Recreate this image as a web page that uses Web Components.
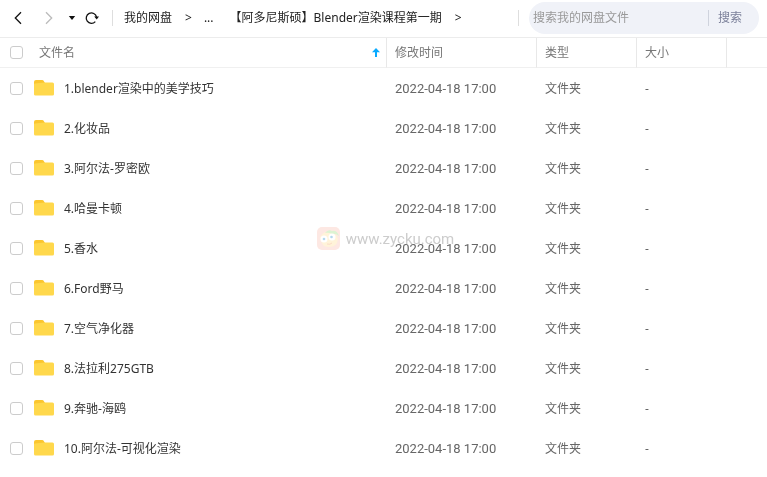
<!DOCTYPE html>
<html lang="zh-CN">
<head>
<meta charset="utf-8">
<meta name="viewport" content="width=device-width, initial-scale=1">
<title>我的网盘</title>
<style>
  body {
    margin: 0;
    background: #fff;
    color: #333;
    font: 12px/20px 'Noto Sans', 'Noto Sans CJK SC', sans-serif;
  }
</style>
</head>
<body>

<drive-toolbar>
  <crumb-link>我的网盘</crumb-link>
  <crumb-link short>...</crumb-link>
  <crumb-link>【阿多尼斯硕】Blender渲染课程第一期</crumb-link>
  <search-box slot="search" placeholder="搜索我的网盘文件">搜索</search-box>
</drive-toolbar>
<file-list></file-list>
<site-watermark>www.zycku.com</site-watermark>

<script>
const toolbarTemplate = document.createElement('template');
toolbarTemplate.innerHTML = `
  <style>
    :host {
      display: flex;
      align-items: center;
      box-sizing: border-box;
      height: 38px;
      padding: 0 8px 1px 0;
      border-bottom: 1px solid #ececec;
    }
    .history {
      display: flex;
      align-items: center;
      padding-left: 8px;
    }
    button {
      display: flex;
      align-items: center;
      justify-content: center;
      width: 20px;
      height: 20px;
      padding: 0;
      border: 0;
      background: none;
      color: #111;
      cursor: pointer;
    }
    button:disabled {
      color: #bbb;
    }
    .forward {
      margin-left: 10px;
    }
    .menu {
      margin-left: 4px;
    }
    .crumbs {
      display: flex;
      flex: 1;
      align-items: center;
      height: 16px;
      margin-left: 10px;
      padding-left: 11px;
      border-left: 1px solid #dedede;
      border-right: 1px solid #dedede;
    }
    svg {
      display: block;
    }
  </style>
  <div class="history">
    <button class="back" aria-label="后退">
      <svg width="20" height="20" fill="none" stroke="currentColor" stroke-width="1.3"><path d="M13 4.300 7.300 10l5.700 5.700"/></svg>
    </button>
    <button class="forward" aria-label="前进" disabled>
      <svg width="20" height="20" fill="none" stroke="currentColor" stroke-width="1.3"><path d="M8 4.300 13.700 10 8 15.700"/></svg>
    </button>
    <button class="menu" aria-label="历史记录">
      <svg width="20" height="20" fill="currentColor"><path d="M6.800 8h6.400L10 12z"/></svg>
    </button>
    <button class="reload" aria-label="刷新">
      <svg width="20" height="20" fill="none" stroke="currentColor" stroke-width="1.3"><path d="M13.300 13.600A5.200 5.200 0 1 1 14.500 9"/><path d="M12.200 8.400h4.800l-2.300 3.200z" fill="currentColor" stroke="none"/></svg>
    </button>
  </div>
  <nav class="crumbs"><slot></slot></nav>
  <slot name="search"></slot>
`;

class DriveToolbar extends HTMLElement {
  constructor() {
    super();
    this.attachShadow({ mode: 'open' });
    this.shadowRoot.appendChild(toolbarTemplate.content.cloneNode(true));
  }
}

const crumbTemplate = document.createElement('template');
crumbTemplate.innerHTML = `
  <style>
    :host {
      display: flex;
      white-space: nowrap;
      color: #222;
    }
    a {
      color: inherit;
      text-decoration: none;
    }
    span {
      margin: 0 12px 0 13px;
    }
    :host([short]) span {
      display: none;
    }
    :host([short]) {
      margin-right: 16px;
    }
  </style>
  <a href="#"><slot></slot></a>
  <span>&gt;</span>
`;

class CrumbLink extends HTMLElement {
  constructor() {
    super();
    this.attachShadow({ mode: 'open' });
    this.shadowRoot.appendChild(crumbTemplate.content.cloneNode(true));
  }
}

const searchTemplate = document.createElement('template');
searchTemplate.innerHTML = `
  <style>
    :host {
      display: flex;
      flex: none;
      align-items: center;
      width: 230px;
      height: 32px;
      margin-left: 10px;
      border-radius: 16px;
      background: #f0f2f8;
    }
    input {
      flex: 1;
      min-width: 0;
      padding: 0 4px;
      border: 0;
      outline: 0;
      background: none;
      font: inherit;
      color: #333;
    }
    input::placeholder {
      color: #999;
      opacity: 1;
    }
    button {
      height: 16px;
      padding: 0 17px 0 9px;
      border: 0;
      border-left: 1px solid #cfd3dd;
      background: none;
      font: inherit;
      line-height: 16px;
      color: #7c819a;
      cursor: pointer;
    }
  </style>
  <input type="text">
  <button><slot></slot></button>
`;

class SearchBox extends HTMLElement {
  constructor() {
    super();
    this.attachShadow({ mode: 'open' });
    this.shadowRoot.appendChild(searchTemplate.content.cloneNode(true));
  }

  connectedCallback() {
    const input = this.shadowRoot.querySelector('input');
    input.placeholder = this.getAttribute('placeholder');
    input.setAttribute('aria-label', input.placeholder);
  }
}

const folderTemplate = document.createElement('template');
folderTemplate.innerHTML = `
  <style>
    :host, svg {
      display: block;
    }
  </style>
  <svg width="20" height="16">
    <path fill="#fbc62f" d="M0 2Q0 0 2 0h6.300q.8 0 1.300.7L11 3v6H0z"/>
    <path fill="#ffd84c" d="M0 4.500Q0 3.500 1 3.500L10.500 2.500H18.500Q20 2.500 20 4V14q0 1.500-1.500 1.500h-17Q0 15.500 0 14z"/>
  </svg>
`;

class FolderIcon extends HTMLElement {
  constructor() {
    super();
    this.attachShadow({ mode: 'open' });
    this.shadowRoot.appendChild(folderTemplate.content.cloneNode(true));
  }
}

const folders = [
  '1.blender渲染中的美学技巧',
  '2.化妆品',
  '3.阿尔法-罗密欧',
  '4.哈曼卡顿',
  '5.香水',
  '6.Ford野马',
  '7.空气净化器',
  '8.法拉利275GTB',
  '9.奔驰-海鸥',
  '10.阿尔法-可视化渲染'
];

const listTemplate = document.createElement('template');
listTemplate.innerHTML = `
  <style>
    :host {
      display: block;
    }
    table {
      width: 100%;
      table-layout: fixed;
      border-collapse: separate;
      border-spacing: 0;
    }
    th, td {
      box-sizing: border-box;
      padding: 0 8px;
      text-align: left;
      font-weight: normal;
      white-space: nowrap;
    }
    th {
      height: 30px;
      border-right: 1px solid #e8e8e8;
      border-bottom: 1px solid #f0f0f0;
      color: #777;
    }
    th:last-child {
      border-right: 0;
    }
    td {
      height: 40px;
      padding-top: 2px;
      color: #666;
    }
    .time { width: 150px; }
    .type { width: 100px; }
    .size { width: 90px; }
    .rest { width: 40px; }
    td.time {
      font-family: Roboto, sans-serif;
      font-size: 13px;
    }
    .name {
      padding: 0 6px 0 10px;
    }
    .line {
      display: flex;
      align-items: center;
    }
    input {
      appearance: none;
      box-sizing: border-box;
      width: 13px;
      height: 13px;
      margin: 0;
      border: 1px solid #ccc;
      border-radius: 3px;
      background: #fff;
    }
    input:checked {
      background: #06a7ff;
    }
    th input {
      margin-right: 16px;
    }
    folder-icon {
      margin: 0 10px 0 11px;
    }
    label {
      padding-top: 2px;
      color: #333;
    }
    svg {
      margin-left: auto;
    }
  </style>
  <table>
    <thead>
      <tr>
        <th class="name">
          <div class="line">
            <input type="checkbox" aria-label="全选">
            <span>文件名</span>
            <svg width="8" height="9" fill="#09aaff"><path d="M4 0l4 4.200H5V9H3V4.200H0z"/></svg>
          </div>
        </th>
        <th class="time">修改时间</th>
        <th class="type">类型</th>
        <th class="size">大小</th>
        <th class="rest"></th>
      </tr>
    </thead>
    <tbody></tbody>
  </table>
`;

class FileList extends HTMLElement {
  constructor() {
    super();
    this.attachShadow({ mode: 'open' });
    this.shadowRoot.appendChild(listTemplate.content.cloneNode(true));
  }

  connectedCallback() {
    this.shadowRoot.querySelector('tbody').innerHTML = folders.map((name, i) => `
      <tr>
        <td class="name">
          <div class="line">
            <input type="checkbox" id="file-${i}">
            <folder-icon></folder-icon>
            <label for="file-${i}">${name}</label>
          </div>
        </td>
        <td class="time">2022-04-18 17:00</td>
        <td>文件夹</td>
        <td>-</td>
        <td></td>
      </tr>
    `).join('');
  }
}

const watermarkTemplate = document.createElement('template');
watermarkTemplate.innerHTML = `
  <style>
    :host {
      position: fixed;
      inset: 0;
      z-index: -1;
      display: flex;
      align-items: center;
      justify-content: center;
      gap: 6px;
      padding-left: 4px;
      color: #ccc;
      font: 15px/20px Roboto, sans-serif;
      pointer-events: none;
    }
  </style>
  <svg width="23" height="23">
    <rect width="23" height="23" rx="5" fill="#fde8e3"/>
    <path fill="#fff3d9" d="M3 10q4-6 9-5 8 1 9 7-1 8-9 8T3 10z"/>
    <path fill="#dcf3d2" d="M8 6q3-4 7-2 5-1 7 5-4-3-7-2-4-2-7-1z"/>
    <circle cx="7" cy="12" r="3.500" fill="#fff"/>
    <circle cx="15" cy="10" r="3.500" fill="#fff"/>
    <circle cx="7" cy="12" r="1.300" fill="#b5d8ee"/>
    <circle cx="14.500" cy="10" r="1.300" fill="#b5d8ee"/>
    <path fill="none" stroke="#fbdcc6" d="M10 17q3 1 5-1"/>
  </svg>
  <slot></slot>
`;

class SiteWatermark extends HTMLElement {
  constructor() {
    super();
    this.attachShadow({ mode: 'open' });
    this.shadowRoot.appendChild(watermarkTemplate.content.cloneNode(true));
  }
}

customElements.define('drive-toolbar', DriveToolbar);
customElements.define('crumb-link', CrumbLink);
customElements.define('search-box', SearchBox);
customElements.define('folder-icon', FolderIcon);
customElements.define('file-list', FileList);
customElements.define('site-watermark', SiteWatermark);
</script>
</body>
</html>
